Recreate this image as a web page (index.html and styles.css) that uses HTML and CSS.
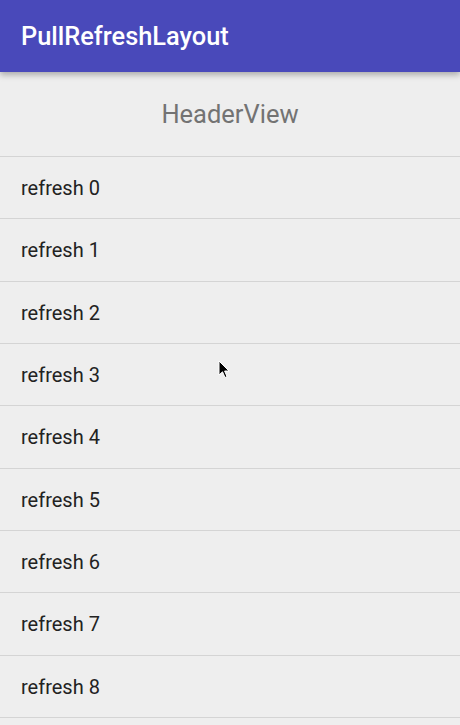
FILE: index.html
```html
<!DOCTYPE html>
<html>
<head>
<meta charset="utf-8">
<link rel="stylesheet" href="styles.css">
</head>
<body>
<div class="app">
  <header class="appbar"><span class="title">PullRefreshLayout</span></header>
  <div class="header-view">HeaderView</div>
  <ul class="list">
    <li class="row">refresh 0</li>
    <li class="row">refresh 1</li>
    <li class="row">refresh 2</li>
    <li class="row">refresh 3</li>
    <li class="row">refresh 4</li>
    <li class="row">refresh 5</li>
    <li class="row">refresh 6</li>
    <li class="row">refresh 7</li>
    <li class="row">refresh 8</li>
  </ul>
  <svg class="cursor" width="14" height="20" viewBox="0 0 14 20"><path d="M1 1 L1 15 L4.5 11.8 L7 17.5 L9 16.6 L6.6 11 L11 11 Z" fill="#000" stroke="#fff" stroke-width="1"/></svg>
</div>
</body>
</html>
```
FILE: styles.css
```css
html, body { margin: 0; padding: 0; }
body { background: #eeeeee; font-family: Roboto, "Noto Sans", sans-serif; }
.app { position: relative; width: 460px; height: 725px; overflow: hidden; background: #eeeeee; }
.appbar {
  position: relative; z-index: 2;
  height: 72px; background: #4949ba;
  display: flex; align-items: center; padding-left: 21px;
  box-shadow: 0 3px 6px rgba(0,0,0,0.28);
}
.title { color: #fff; font-size: 25.4px; font-weight: 500; margin-top: 0; }
.header-view {
  height: 85px; display: flex; align-items: center; justify-content: center;
  color: #737373; font-size: 25.5px; border-bottom: 1px solid #d4d4d4; box-sizing: border-box;
  padding-bottom: 1px;
}
.list { list-style: none; margin: 0; padding: 0; }
.row {
  height: 62.33px; box-sizing: border-box; border-bottom: 1px solid #d4d4d4;
  display: flex; align-items: center; padding-left: 21px; padding-top: 1px;
  color: #222; font-size: 20px;
}
.cursor { position: absolute; left: 218px; top: 360px; z-index: 3; }
```
